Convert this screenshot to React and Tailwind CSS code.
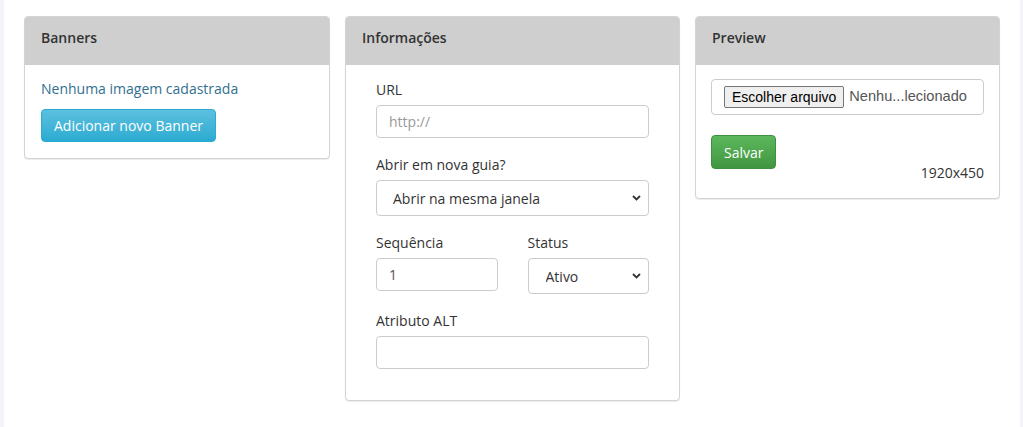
import React from "react";

function Chevron() {
  return (
    <svg className="absolute right-[8px] top-1/2 -translate-y-1/2 pointer-events-none" width="9" height="6" viewBox="0 0 9 6">
      <path d="M1 1l3.5 3.5L8 1" fill="none" stroke="#333" strokeWidth="1.8" />
    </svg>
  );
}

function Panel({ title, className, children }) {
  return (
    <div className={"bg-white border border-[#d4d4d4] rounded-[4px] shadow-[0_1px_1px_rgba(0,0,0,0.08)] overflow-hidden " + className}>
      <div className="h-[48px] bg-[#cfcfcf] flex items-center px-[16px] pb-[8px] font-semibold text-[14px] text-[#333]">
        {title}
      </div>
      {children}
    </div>
  );
}

function Label({ children }) {
  return <div className="text-[14px] text-[#333] leading-[20px] mb-[5px]">{children}</div>;
}

export default function App() {
  return (
    <div className="flex w-full h-[427px] bg-white" style={{ fontFamily: '"Open Sans", sans-serif' }}>
      <div className="w-[4px] bg-[#f3f4f7]" />
      <div className="flex-1 flex items-start gap-[15px] px-[20px] pt-[16px]">
        <Panel title="Banners" className="w-[306px]">
          <div className="px-[16px] pt-[14px] pb-[16px]">
            <div className="text-[14px] text-[#31708f] leading-[20px] mb-[10px]">Nenhuma imagem cadastrada</div>
            <button className="h-[33px] px-[12px] rounded-[4px] text-white text-[14px] border border-[#2aabd2] bg-gradient-to-b from-[#5bc0de] to-[#2aabd2]">
              Adicionar novo Banner
            </button>
          </div>
        </Panel>

        <Panel title="Informações" className="w-[335px]">
          <div className="px-[30px] pt-[15px] pb-[31px]">
            <Label>URL</Label>
            <input
              className="w-full h-[33px] border border-[#ccc] rounded-[4px] px-[12px] text-[14px] text-[#555] placeholder:text-[#999] outline-none"
              placeholder="http://"
            />
            <div className="mt-[17px]">
              <Label>Abrir em nova guia?</Label>
              <div className="relative">
                <select className="appearance-none w-full h-[36px] border border-[#ccc] rounded-[4px] pl-[16px] text-[14px] text-[#333] bg-white outline-none">
                  <option>Abrir na mesma janela</option>
                </select>
                <Chevron />
              </div>
            </div>
            <div className="mt-[17px] grid grid-cols-2 gap-[30px]">
              <div>
                <Label>Sequência</Label>
                <input
                  className="w-full h-[33px] border border-[#ccc] rounded-[4px] px-[12px] text-[14px] text-[#555] outline-none"
                  defaultValue="1"
                />
              </div>
              <div>
                <Label>Status</Label>
                <div className="relative">
                  <select className="appearance-none w-full h-[36px] border border-[#ccc] rounded-[4px] pl-[17px] text-[14px] text-[#333] bg-white outline-none">
                    <option>Ativo</option>
                  </select>
                  <Chevron />
                </div>
              </div>
            </div>
            <div className="mt-[17px]">
              <Label>Atributo ALT</Label>
              <input className="w-full h-[33px] border border-[#ccc] rounded-[4px] px-[12px] text-[14px] text-[#555] outline-none" />
            </div>
          </div>
        </Panel>

        <Panel title="Preview" className="w-[305px]">
          <div className="px-[15px] pt-[14px] pb-[17px]">
            <div className="h-[36px] border border-[#ccc] rounded-[4px] flex items-center pl-[12px] gap-[5px]" style={{ fontFamily: '"Liberation Sans", Arial, sans-serif' }}>
              <span className="h-[22px] px-[7px] flex items-center border border-[#767676] rounded-[2px] bg-[#efefef] text-[14px] text-black">
                Escolher arquivo
              </span>
              <span className="text-[14.6px] text-[#555]">Nenhu...lecionado</span>
            </div>
            <button className="mt-[20px] h-[34px] px-[12px] rounded-[4px] text-white text-[14px] border border-[#3e8f3e] bg-gradient-to-b from-[#5cb85c] to-[#419641]">
              Salvar
            </button>
            <div className="text-right text-[14px] text-[#333] leading-[16px] -mt-[4px]">1920x450</div>
          </div>
        </Panel>
      </div>
      <div className="w-[3px] bg-[#f3f4f7]" />
    </div>
  );
}
